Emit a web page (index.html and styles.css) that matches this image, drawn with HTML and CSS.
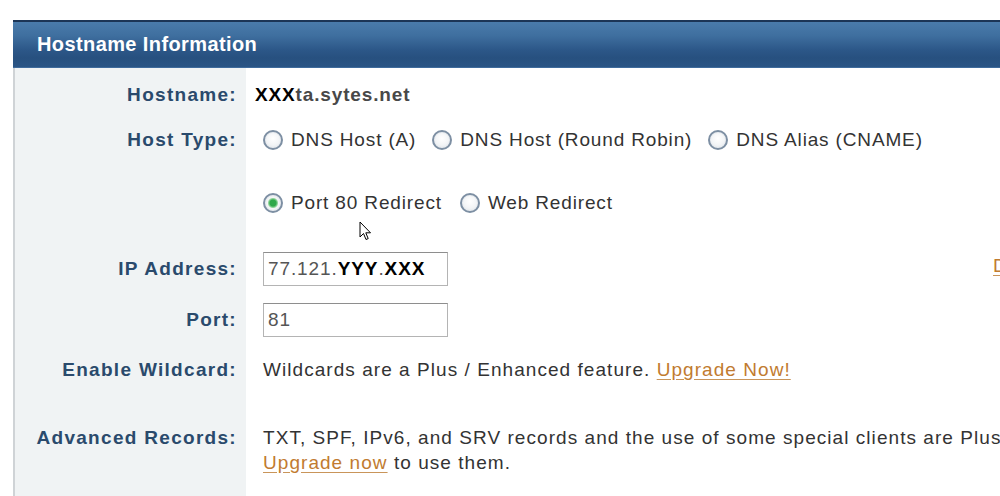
FILE: index.html
```html
<!DOCTYPE html>
<html lang="en">
<head>
<meta charset="utf-8">
<title>Hostname Information</title>
<link rel="stylesheet" href="styles.css">
</head>
<body>
<div class="page">
  <div class="panel">
    <div class="panel-head">Hostname Information</div>
    <div class="form">
      <div class="row row-host">
        <div class="label">Hostname:</div>
        <div class="value"><span class="hostname"><b class="mask">XXX</b>ta.sytes.net</span></div>
      </div>
      <div class="row row-type">
        <div class="label">Host Type:</div>
        <div class="value">
          <div class="radios">
            <label class="radio"><input type="radio" name="type"><span>DNS Host (A)</span></label>
            <label class="radio"><input type="radio" name="type"><span>DNS Host (Round Robin)</span></label>
            <label class="radio"><input type="radio" name="type"><span>DNS Alias (CNAME)</span></label>
          </div>
          <div class="radios radios-second">
            <label class="radio"><input type="radio" name="type" checked><span>Port 80 Redirect</span></label>
            <label class="radio"><input type="radio" name="type"><span>Web Redirect</span></label>
          </div>
        </div>
      </div>
      <div class="row row-field">
        <div class="label label-field">IP Address:</div>
        <div class="value value-field">
          <div class="textbox">77.121.<b class="mask">YYY</b>.<b class="mask">XXX</b></div>
          <a class="link side-link" href="#">Detect</a>
        </div>
      </div>
      <div class="row row-field">
        <div class="label label-field">Port:</div>
        <div class="value value-field">
          <div class="textbox">81</div>
        </div>
      </div>
      <div class="row row-wild">
        <div class="label">Enable Wildcard:</div>
        <div class="value">Wildcards are a Plus / Enhanced feature. <a class="link" href="#">Upgrade Now!</a></div>
      </div>
      <div class="row row-adv">
        <div class="label">Advanced Records:</div>
        <div class="value value-adv">TXT, SPF, IPv6, and SRV records and the use of some special clients are Plus / Enhanced features.<br><a class="link" href="#">Upgrade now</a> to use them.</div>
      </div>
    </div>
  </div>
  <svg class="cursor" width="13" height="21" viewBox="0 0 13 21" aria-hidden="true">
    <path d="M1 1 L1 16 L4.5 12.5 L7 18.5 L9.2 17.6 L6.8 11.8 L11.5 11.8 Z" fill="#fff" stroke="#000" stroke-width="1" stroke-linejoin="miter"/>
  </svg>
</div>
</body>
</html>
```

FILE: styles.css
```css
html, body {
  margin: 0;
  padding: 0;
  overflow: hidden;
  background: #fff;
}

body {
  font-family: "Liberation Sans", Arial, sans-serif;
  color: #333;
}

.page {
  position: relative;
  width: 1000px;
  height: 496px;
  padding: 20px 0 0 13px;
  box-sizing: border-box;
  overflow: hidden;
}

.panel {
  width: 1400px;
  height: 520px;
  border-left: 2px solid #cfd3d6;
  box-sizing: border-box;
  display: flex;
  flex-direction: column;
}

.panel-head {
  height: 48px;
  box-sizing: border-box;
  border-top: 2px solid #1c3556;
  border-bottom: 1px solid #3f6b9c;
  margin-left: -2px;
  padding-left: 24px;
  display: flex;
  align-items: center;
  background: linear-gradient(to bottom, #4a7bab 0%, #3f6f9f 30%, #2c5788 62%, #27507f 80%, #2a5585 100%);
  color: #fff;
  font-size: 20px;
  font-weight: bold;
  letter-spacing: 0.4px;
}

.form {
  flex: 1;
  display: flex;
  flex-direction: column;
}

.row {
  display: grid;
  grid-template-columns: 231px 1fr;
}

.row-adv {
  flex: 1;
}

.label {
  background: #f0f3f4;
  text-align: right;
  padding-right: 9px;
  font-size: 19px;
  font-weight: bold;
  letter-spacing: 1.3px;
  line-height: 24px;
  color: #2a4a6c;
}

.value {
  font-size: 19px;
  letter-spacing: 1.05px;
  line-height: 24px;
  color: #333;
  padding-left: 17px;
  white-space: nowrap;
}

.row-host .label,
.row-host .value {
  padding-top: 15px;
  padding-bottom: 10px;
}

.row-host .value {
  padding-left: 9px;
}

.hostname {
  font-weight: bold;
  color: #484848;
  letter-spacing: 0.85px;
}

.mask {
  color: #000;
  font-weight: bold;
}

.row-type .label,
.row-type .value {
  padding-top: 11px;
  padding-bottom: 20px;
}

.radios {
  display: flex;
  align-items: center;
  gap: 16px;
  height: 24px;
  letter-spacing: 0.85px;
}

.radios-second {
  margin-top: 39px;
}

.radios-second .radio + .radio {
  margin-left: 2px;
}

.radio {
  display: flex;
  align-items: center;
  gap: 8px;
}

.radio input {
  appearance: none;
  -webkit-appearance: none;
  margin: 0;
  width: 20px;
  height: 20px;
  border-radius: 50%;
  border: 2px solid #7d8fa3;
  box-sizing: border-box;
  background: radial-gradient(circle at 50% 40%, #ffffff 0%, #f2f4f6 55%, #d9dee3 100%);
  box-shadow: inset 0 0 0 1px #e9edf1;
  position: relative;
}

.radio input:checked {
  background: radial-gradient(circle at 50% 50%, #2fa84a 0 3px, #8fd49a 4.5px, #f4f6f7 5.5px, #dfe3e7 100%);
}

.row-field .label,
.row-field .value {
  padding-top: 17px;
}

.label-field {
  line-height: 34px;
}

.value-field {
  display: flex;
  align-items: center;
}

.textbox {
  width: 185px;
  height: 34px;
  box-sizing: border-box;
  border: 1px solid #b4b4b4;
  border-top-color: #8e8e8e;
  padding-left: 4px;
  line-height: 32px;
  color: #555;
  font-size: 19px;
  letter-spacing: 0.9px;
  background: #fff;
}

.side-link {
  margin-left: 545px;
  margin-top: -6px;
}

.row-wild .label,
.row-wild .value {
  padding-top: 21px;
}

.row-adv .label,
.row-adv .value {
  padding-top: 43px;
  line-height: 25px;
}

.link {
  color: #c17b30;
  text-decoration: underline;
  text-decoration-color: #c9955a;
  text-underline-offset: 3px;
}

.cursor {
  position: absolute;
  left: 359px;
  top: 221px;
}
```
